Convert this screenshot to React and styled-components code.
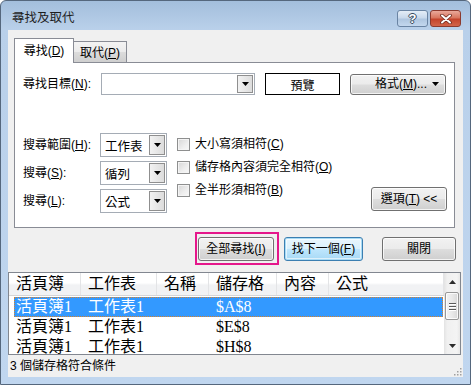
import styled, { createGlobalStyle } from 'styled-components';

const GlobalStyle = createGlobalStyle`
  html, body { margin: 0; padding: 0; background: #ffffff; }
  body {
    font-family: 'Liberation Sans', 'Noto Sans CJK TC', sans-serif;
    font-size: 12px;
    color: #000;
  }
  u { text-underline-offset: 1px; }
`;

const columns = [
  { title: '活頁簿', width: 72 },
  { title: '工作表', width: 76 },
  { title: '名稱', width: 52 },
  { title: '儲存格', width: 68 },
  { title: '內容', width: 52 },
  { title: '公式', width: 0 },
];

const results = [
  ['活頁簿1', '工作表1', '', '$A$8', '', ''],
  ['活頁簿1', '工作表1', '', '$E$8', '', ''],
  ['活頁簿1', '工作表1', '', '$H$8', '', ''],
];

function Arrow({ color = '#000' }) {
  return (
    <svg width="7" height="4" viewBox="0 0 7 4">
      <path d="M0 0h7L3.5 4z" fill={color} />
    </svg>
  );
}

function Combo({ width, height, value }) {
  return (
    <ComboBox $w={width} $h={height}>
      <ComboText>{value}</ComboText>
      <DropButton>
        <Arrow />
      </DropButton>
    </ComboBox>
  );
}

function Check({ children }) {
  return (
    <CheckRow>
      <CheckBox />
      <span>{children}</span>
    </CheckRow>
  );
}

export default function App() {
  return (
    <>
      <GlobalStyle />
      <Window>
        <TitleBar>
          <Title>尋找及取代</Title>
          <Caption>
            <HelpButton>?</HelpButton>
            <CloseButton>
              <svg width="12" height="10" viewBox="0 0 12 10">
                <path d="M2 1.5l8 7M10 1.5l-8 7" stroke="#6b2a1f" strokeWidth="3.6" strokeLinecap="round" />
                <path d="M2 1.5l8 7M10 1.5l-8 7" stroke="#ffffff" strokeWidth="2" strokeLinecap="round" />
              </svg>
            </CloseButton>
          </Caption>
        </TitleBar>

        <Client>
          <Tabs>
            <TabStrip>
              <Tab $active><span>尋找(<u>D</u>)</span></Tab>
              <Tab><span>取代(<u>P</u>)</span></Tab>
            </TabStrip>
            <Panel>
              <FindRow>
                <Label $w={78}>尋找目標(<u>N</u>):</Label>
                <Combo width={154} height={22} value="" />
                <Preview>預覽</Preview>
                <FormatButton>
                  <span>格式(<u>M</u>)...</span>
                  <Arrow />
                </FormatButton>
              </FindRow>

              <Lower>
                <Fields>
                  <Label>搜尋範圍(<u>H</u>):</Label>
                  <Combo width={67} height={24} value="工作表" />
                  <Label>搜尋(<u>S</u>):</Label>
                  <Combo width={67} height={24} value="循列" />
                  <Label>搜尋(<u>L</u>):</Label>
                  <Combo width={67} height={24} value="公式" />
                </Fields>
                <Checks>
                  <Check>大小寫須相符(<u>C</u>)</Check>
                  <Check>儲存格內容須完全相符(<u>O</u>)</Check>
                  <Check>全半形須相符(<u>B</u>)</Check>
                </Checks>
                <OptionsButton>
                  <span>選項(<u>T</u>) &lt;&lt;</span>
                </OptionsButton>
              </Lower>
            </Panel>
          </Tabs>

          <ActionRow>
            <Highlight>
              <Button $w={76}><span>全部尋找(<u>I</u>)</span></Button>
            </Highlight>
            <Button $w={79} $default><span>找下一個(<u>F</u>)</span></Button>
            <Button $w={74} $gap={19}><span>關閉</span></Button>
          </ActionRow>

          <ListBox>
            <Table>
              <HeaderRow>
                {columns.map((c) => (
                  <HeaderCell key={c.title} $w={c.width}>{c.title}</HeaderCell>
                ))}
              </HeaderRow>
              <Rows>
                {results.map((r, i) => (
                  <Row key={i} $selected={i === 0}>
                    {r.map((v, j) => (
                      <Cell key={j} $w={j === 0 ? 67 : columns[j].width} $first={j === 0}>{v}</Cell>
                    ))}
                  </Row>
                ))}
              </Rows>
            </Table>
            <ScrollBar>
              <ScrollArrow>
                <svg width="7" height="4" viewBox="0 0 7 4"><path d="M0 4h7L3.5 0z" fill="#2c2c2c" /></svg>
              </ScrollArrow>
              <Thumb>
                <Grip />
                <Grip />
                <Grip />
              </Thumb>
              <ScrollArrow $bottom>
                <Arrow color="#2c2c2c" />
              </ScrollArrow>
            </ScrollBar>
          </ListBox>

          <StatusBar>
            <span>3 個儲存格符合條件</span>
            <svg width="10" height="10" viewBox="0 0 10 10">
              {[[8, 2], [5, 5], [8, 5], [2, 8], [5, 8], [8, 8]].map(([x, y]) => (
                <rect key={`${x}-${y}`} x={x} y={y} width="1.5" height="1.5" fill="#a0a0a0" />
              ))}
            </svg>
          </StatusBar>
        </Client>
      </Window>
    </>
  );
}

const Window = styled.div`
  width: 471px;
  height: 385px;
  box-sizing: border-box;
  border: 1px solid #55677d;
  border-radius: 6px 6px 0 0;
  padding: 0 7px 7px 7px;
  display: flex;
  flex-direction: column;
  background: linear-gradient(180deg, #a3bedc 0px, #b9d0ea 28px, #c0d6ef 100%);
  overflow: hidden;
`;

const TitleBar = styled.div`
  height: 29px;
  display: flex;
  align-items: flex-start;
  justify-content: space-between;
`;

const Title = styled.div`
  padding: 9px 0 0 4px;
  font-size: 12.5px;
  line-height: 16px;
  color: #1e1e1e;
`;

const Caption = styled.div`
  display: flex;
  gap: 2px;
  margin: 9px 2px 0 0;
`;

const CaptionButton = styled.div`
  width: 31px;
  height: 17px;
  box-sizing: border-box;
  border-radius: 3px;
  display: flex;
  align-items: center;
  justify-content: center;
`;

const HelpButton = styled(CaptionButton)`
  border: 1px solid #6a84a3;
  background: linear-gradient(180deg, #e4edf7 0%, #c9d9ec 45%, #afc6e0 55%, #c3d7ee 100%);
  color: #fff;
  font: bold 13px 'Liberation Sans', sans-serif;
  text-shadow: 0 0 1px #3b4c61, 1px 0 0 #3b4c61, -1px 0 0 #3b4c61, 0 1px 0 #3b4c61, 0 -1px 0 #3b4c61;
`;

const CloseButton = styled(CaptionButton)`
  border: 1px solid #8b3a2e;
  background: linear-gradient(180deg, #e9a99b 0%, #d8765f 45%, #c4442c 55%, #d2654a 100%);
`;

const Client = styled.div`
  flex: 1;
  background: #f0f0f0;
  display: flex;
  flex-direction: column;
`;

const Tabs = styled.div`
  margin: 8px 8px 0 6px;
`;

const TabStrip = styled.div`
  height: 24px;
  display: flex;
  align-items: flex-end;
`;

const Tab = styled.div`
  position: relative;
  box-sizing: border-box;
  border: 1px solid #898c95;
  border-bottom: 0;
  display: flex;
  align-items: center;
  justify-content: center;
  line-height: 14px;
  white-space: nowrap;
  ${(p) =>
    p.$active
      ? `
    width: 60px;
    height: 25px;
    margin-bottom: -1px;
    background: #ffffff;
    z-index: 1;
  `
      : `
    width: 54px;
    height: 21px;
    margin-left: -1px;
    padding-top: 1px;
    background: linear-gradient(180deg, #f3f3f3 0%, #ebebeb 50%, #dcdcdc 51%, #cfcfcf 100%);
  `}
`;

const Panel = styled.div`
  height: 166px;
  box-sizing: border-box;
  border: 1px solid #898c95;
  background: #ffffff;
  padding: 10px 7px 0 8px;
  display: flex;
  flex-direction: column;
`;

const FindRow = styled.div`
  display: flex;
  align-items: center;
  height: 22px;
`;

const Label = styled.div`
  width: ${(p) => (p.$w ? `${p.$w}px` : 'auto')};
  white-space: nowrap;
  line-height: 14px;
`;

const ComboBox = styled.div`
  width: ${(p) => p.$w}px;
  height: ${(p) => p.$h}px;
  box-sizing: border-box;
  border: 1px solid #a5acb5;
  background: #ffffff;
  display: flex;
  align-items: stretch;
`;

const ComboText = styled.div`
  flex: 1;
  padding-left: 4px;
  display: flex;
  align-items: center;
  font-size: 12.5px;
`;

const DropButton = styled.div`
  width: 16px;
  margin: 1px;
  box-sizing: border-box;
  border: 1px solid #8f8f8f;
  background: linear-gradient(90deg, #f2f2f2 0%, #dcdcdc 100%);
  display: flex;
  align-items: center;
  justify-content: center;
`;

const Preview = styled.div`
  width: 75px;
  height: 22px;
  box-sizing: border-box;
  margin-left: 10px;
  border: 1px solid #000;
  display: flex;
  align-items: center;
  justify-content: center;
`;

const ButtonBase = styled.div`
  box-sizing: border-box;
  height: 24px;
  border: 1px solid #707070;
  border-radius: 3px;
  background: linear-gradient(180deg, #f2f2f2 0%, #ebebeb 48%, #dddddd 52%, #cfcfcf 100%);
  box-shadow: inset 0 0 0 1px rgba(255, 255, 255, 0.75);
  display: flex;
  align-items: center;
  justify-content: center;
  line-height: 14px;
  white-space: nowrap;
`;

const FormatButton = styled(ButtonBase)`
  width: 96px;
  height: 21px;
  margin-left: 10px;
  padding: 0 6px 0 24px;
  justify-content: space-between;
`;

const Lower = styled.div`
  display: flex;
  margin-top: 38px;
`;

const Fields = styled.div`
  display: grid;
  grid-template-columns: 77px 67px;
  grid-auto-rows: 24px;
  row-gap: 4px;
  align-items: center;
`;

const Checks = styled.div`
  display: flex;
  flex-direction: column;
  gap: 10px;
  margin-left: 10px;
  padding-top: 5px;
`;

const CheckRow = styled.div`
  display: flex;
  align-items: center;
  gap: 5px;
  height: 13px;
  line-height: 13px;
  white-space: nowrap;
`;

const CheckBox = styled.div`
  width: 13px;
  height: 13px;
  box-sizing: border-box;
  border: 1px solid #8e8f8f;
  background: linear-gradient(135deg, #d6d6d6 0%, #eeeeee 60%, #f8f8f8 100%);
  box-shadow: inset 0 0 0 1px #f4f4f4;
`;

const OptionsButton = styled(ButtonBase)`
  width: 76px;
  margin: auto 0 2px auto;
`;

const ActionRow = styled.div`
  display: flex;
  align-items: center;
  justify-content: flex-end;
  margin-top: 4px;
  padding-right: 7px;
`;

const Highlight = styled.div`
  border: 2px solid #e5178b;
  padding: 3px 3px 2px 1px;
`;

const Button = styled(ButtonBase)`
  width: ${(p) => p.$w}px;
  margin-left: ${(p) => (p.$gap ? `${p.$gap}px` : '0')};
  ${(p) =>
    p.$default &&
    `
    margin-left: 5px;
    border-color: #3c7fb1;
    box-shadow: inset 0 0 0 1px #a8dbf5, inset 0 0 0 2px rgba(255,255,255,0.6);
    background: linear-gradient(180deg, #eaf6fd 0%, #d9f0fc 48%, #bee6fd 52%, #a7d9f5 100%);
  `}
`;

const ListBox = styled.div`
  height: 83px;
  box-sizing: border-box;
  margin: 7px 2px 0 0;
  border: 1px solid #828790;
  background: #ffffff;
  display: flex;
  overflow: hidden;
`;

const Table = styled.div`
  flex: 1;
  min-width: 0;
  font-family: 'Liberation Serif', 'Noto Sans CJK TC', serif;
  font-size: 16px;
`;

const HeaderRow = styled.div`
  height: 22px;
  display: flex;
  border-bottom: 1px solid #d5d5d5;
  background: linear-gradient(180deg, #ffffff 0%, #ffffff 45%, #f1f2f4 55%, #f1f2f4 100%);
`;

const HeaderCell = styled.div`
  ${(p) => (p.$w ? `width: ${p.$w}px;` : 'flex: 1;')}
  box-sizing: border-box;
  padding-left: 7px;
  border-right: 1px solid #e3e4e6;
  line-height: 22px;
  white-space: nowrap;
`;

const Rows = styled.div`
  padding: 1px 1px 0 5px;
`;

const Row = styled.div`
  height: 20px;
  display: flex;
  box-sizing: border-box;
  ${(p) =>
    p.$selected &&
    `
    background: #3399ff;
    color: #ffffff;
    outline: 1px dotted #d9822b;
    outline-offset: -1px;
  `}
`;

const Cell = styled.div`
  ${(p) => (p.$w ? `width: ${p.$w}px;` : 'flex: 1;')}
  box-sizing: border-box;
  padding-left: ${(p) => (p.$first ? 2 : 7)}px;
  line-height: 20px;
  white-space: nowrap;
`;

const ScrollBar = styled.div`
  width: 16px;
  display: flex;
  flex-direction: column;
  background: linear-gradient(90deg, #e3e3e3 0%, #f0f0f0 20%, #f4f4f4 80%, #e8e8e8 100%);
`;

const ScrollArrow = styled.div`
  height: 17px;
  display: flex;
  align-items: center;
  justify-content: center;
  margin-top: ${(p) => (p.$bottom ? 'auto' : '0')};
`;

const Thumb = styled.div`
  height: 28px;
  margin: 2px 1px 0 1px;
  box-sizing: border-box;
  border: 1px solid #979797;
  border-radius: 2px;
  background: linear-gradient(90deg, #f3f3f3 0%, #e9e9e9 50%, #d8d8d8 100%);
  box-shadow: inset 0 0 0 1px rgba(255, 255, 255, 0.8);
  display: flex;
  flex-direction: column;
  align-items: center;
  justify-content: center;
  gap: 2px;
`;

const Grip = styled.div`
  width: 7px;
  height: 1px;
  background: #5a5a5a;
  box-shadow: 0 1px 0 #ffffff;
`;

const StatusBar = styled.div`
  flex: 1;
  display: flex;
  align-items: center;
  justify-content: space-between;
  padding: 0 1px 0 2px;
  line-height: 14px;

  svg {
    align-self: flex-end;
    margin-bottom: 1px;
  }
`;
